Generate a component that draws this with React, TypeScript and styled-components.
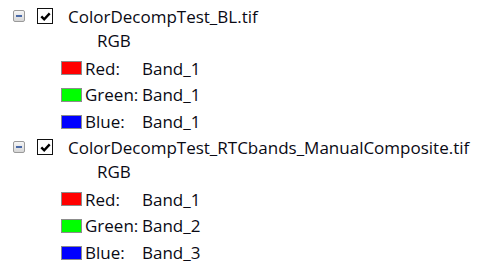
import React from "react";
import styled, { createGlobalStyle } from "styled-components";

const Global = createGlobalStyle`
  html, body { margin: 0; padding: 0; background: #ffffff; }
  body { font-family: "Open Sans", "Noto Sans", sans-serif; color: #0a0a14; }
`;

const Tree = styled.div`
  display: flex;
  flex-direction: column;
  padding-top: 4px;
  width: 489px;
`;

const Group = styled.div`
  display: flex;
  flex-direction: column;
  height: 131px;
`;

const LayerRow = styled.div`
  display: flex;
  align-items: center;
  height: 24px;
  font-size: 17px;
`;

const Expander = styled.div`
  box-sizing: border-box;
  width: 12px;
  height: 12px;
  margin-left: 13px;
  border: 1px solid #9a9a9a;
  border-radius: 2px;
  background: linear-gradient(#f6f6f6, #d6d6d6);
  display: flex;
  align-items: center;
  justify-content: center;
  &::after {
    content: "";
    width: 6px;
    height: 2px;
    background: #4a6aa8;
  }
`;

const Check = styled.div`
  box-sizing: border-box;
  width: 16px;
  height: 16px;
  margin-left: 12px;
  border: 1.5px solid #111;
  background: #fff;
  display: flex;
  align-items: center;
  justify-content: center;
`;

const Title = styled.span`
  margin-left: 15px;
  white-space: nowrap;
`;

const SubRow = styled.div`
  box-sizing: border-box;
  display: flex;
  align-items: center;
  height: 27px;
  padding-bottom: 3px;
  padding-left: 97px;
  font-size: 17px;
`;

const BandRow = styled.div<{ $h: number }>`
  display: flex;
  align-items: center;
  height: ${(p) => p.$h}px;
  padding-left: 61px;
  font-size: 17px;
`;

const Swatch = styled.div<{ $c: string }>`
  box-sizing: border-box;
  width: 21px;
  height: 14px;
  border: 1px solid #8c8c8c;
  background: ${(p) => p.$c};
  margin-right: 3px;
`;

const Label = styled.span`
  width: 57px;
  white-space: nowrap;
`;

const Value = styled.span`
  white-space: nowrap;
`;

const CheckMark = () => (
  <svg width="11" height="11" viewBox="0 0 11 11">
    <path d="M1.3 5.3 L4.2 8.3 L9.7 2.4" fill="none" stroke="#000" strokeWidth="2.4" />
  </svg>
);

type Layer = { name: string; bands: [string, string, string] };

const layers: Layer[] = [
  { name: "ColorDecompTest_BL.tif", bands: ["Band_1", "Band_1", "Band_1"] },
  { name: "ColorDecompTest_RTCbands_ManualComposite.tif", bands: ["Band_1", "Band_2", "Band_3"] },
];

const channels = [
  { label: "Red:", color: "#ff0000", h: 26 },
  { label: "Green:", color: "#00ff00", h: 27 },
  { label: "Blue:", color: "#0000ff", h: 27 },
];

export default function App() {
  return (
    <>
      <Global />
      <Tree>
        {layers.map((l) => (
          <Group key={l.name}>
            <LayerRow>
              <Expander />
              <Check>
                <CheckMark />
              </Check>
              <Title>{l.name}</Title>
            </LayerRow>
            <SubRow>RGB</SubRow>
            {channels.map((c, i) => (
              <BandRow key={c.label} $h={c.h}>
                <Swatch $c={c.color} />
                <Label>{c.label}</Label>
                <Value>{l.bands[i]}</Value>
              </BandRow>
            ))}
          </Group>
        ))}
      </Tree>
    </>
  );
}
